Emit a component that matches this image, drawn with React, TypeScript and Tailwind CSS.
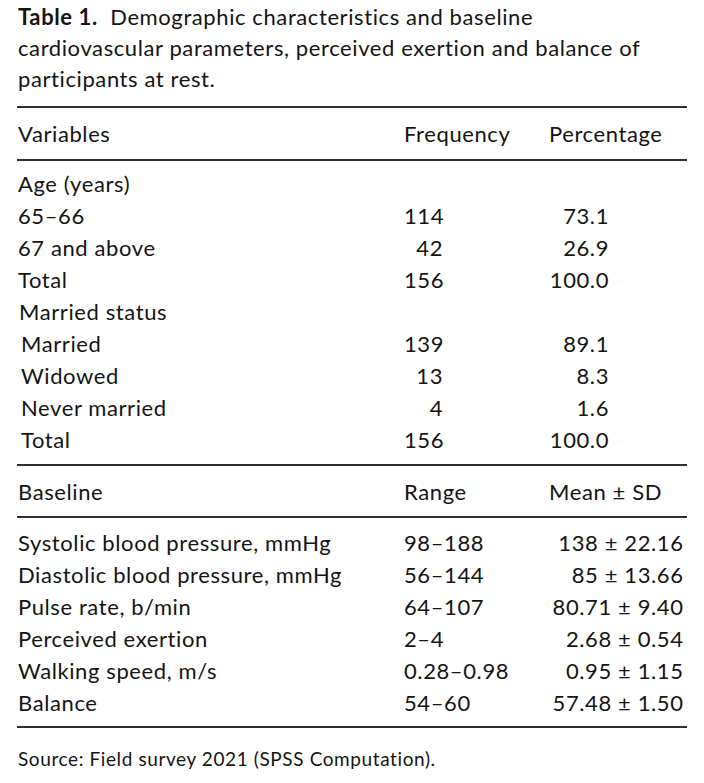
const font = { fontFamily: 'Lato, "Open Sans", sans-serif' };

const ageRows = [
  { label: '65–66', freq: '114', pct: '73.1' },
  { label: '67 and above', freq: '42', pct: '26.9' },
  { label: 'Total', freq: '156', pct: '100.0' },
];

const maritalRows = [
  { label: 'Married', freq: '139', pct: '89.1' },
  { label: 'Widowed', freq: '13', pct: '8.3' },
  { label: 'Never married', freq: '4', pct: '1.6' },
  { label: 'Total', freq: '156', pct: '100.0' },
];

const baselineRows = [
  { label: 'Systolic blood pressure, mmHg', range: '98–188', mean: '138', sd: '22', dec: '.16' },
  { label: 'Diastolic blood pressure, mmHg', range: '56–144', mean: '85', sd: '13', dec: '.66' },
  { label: 'Pulse rate, b/min', range: '64–107', mean: '80.71', sd: '9', dec: '.40' },
  { label: 'Perceived exertion', range: '2–4', mean: '2.68', sd: '0', dec: '.54' },
  { label: 'Walking speed, m/s', range: '0.28–0.98', mean: '0.95', sd: '1', dec: '.15' },
  { label: 'Balance', range: '54–60', mean: '57.48', sd: '1', dec: '.50' },
];

const row = 'grid grid-cols-[386px_145px_1fr] h-8 items-center pl-px';

function Rule() {
  return <div className="h-[2px] bg-[#2e2e2e]" />;
}

export default function App() {
  return (
    <div className="min-h-screen bg-white text-[#141414] px-[17px] pt-px tracking-[0.6px]" style={font}>
      {/* caption */}
      <p className="text-[22px] leading-[31px] pl-px whitespace-nowrap">
        <span className="font-bold">Table 1.</span>&nbsp; Demographic characteristics and baseline
        <br />
        cardiovascular parameters, perceived exertion and balance of
        <br />
        participants at rest.
      </p>

      <div className="mt-[12px] text-[22px]">
        <Rule />
        <div className={`${row} h-[51px]`}>
          <div>Variables</div>
          <div>Frequency</div>
          <div>Percentage</div>
        </div>
        <Rule />

        <div className="pt-[6px] pb-[9px]">
          <div className={row}>
            <div>Age (years)</div>
          </div>
          {ageRows.map((r, i) => (
            <div key={i} className={row}>
              <div>{r.label}</div>
              <div className="w-[39px] text-right">{r.freq}</div>
              <div className="w-[60px] text-right">{r.pct}</div>
            </div>
          ))}
          <div className={row}>
            <div className="pl-px">Married status</div>
          </div>
          {maritalRows.map((r, i) => (
            <div key={i} className={row}>
              <div className="pl-[3px]">{r.label}</div>
              <div className="w-[39px] text-right">{r.freq}</div>
              <div className="w-[60px] text-right">{r.pct}</div>
            </div>
          ))}
        </div>

        <Rule />
        <div className={`${row} h-[50px]`}>
          <div>Baseline</div>
          <div>Range</div>
          <div>Mean ± SD</div>
        </div>
        <Rule />

        <div className="py-[8px]">
          {baselineRows.map((r, i) => (
            <div key={i} className={row}>
              <div>{r.label}</div>
              <div>{r.range}</div>
              <div className="flex">
                <span className="w-[102px] text-right whitespace-nowrap">
                  {r.mean} ± {r.sd}
                </span>
                <span>{r.dec}</span>
              </div>
            </div>
          ))}
        </div>
        <Rule />
      </div>

      <p className="mt-[17px] text-[19px] pl-px">Source: Field survey 2021 (SPSS Computation).</p>
    </div>
  );
}
